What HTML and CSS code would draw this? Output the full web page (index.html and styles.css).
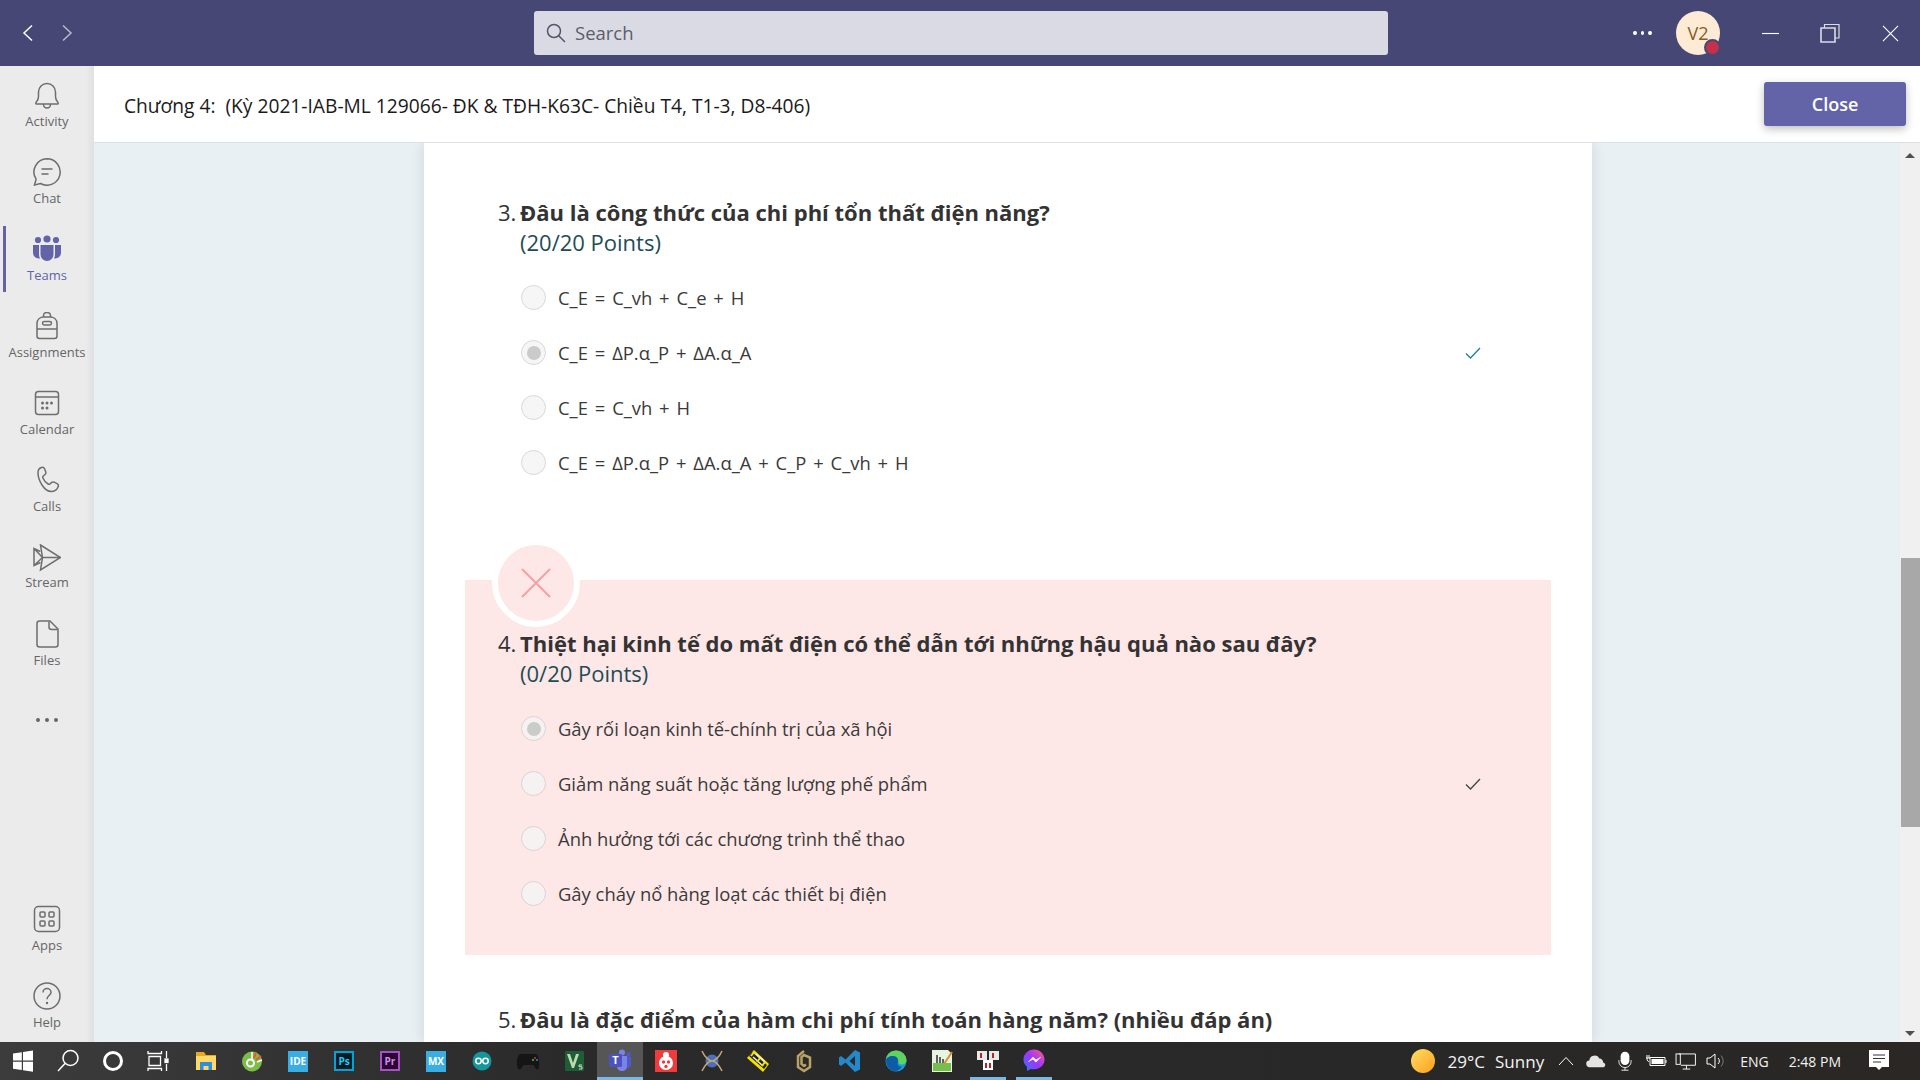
FILE: index.html
```html
<!DOCTYPE html>
<html>
    <head>
        <meta charset="utf-8">
        <meta name="viewport" content="width=device-width, initial-scale=1">
        <title>Chương 4</title>
        <link rel="stylesheet" href="styles.css">
    </head>
    <body>
        <div class="page">
            <div class="titlebar">
                <div class="history">
                    <svg class="hist-icon" viewBox="0 0 12 18"><path d="M10 1.500 2 9l8 7.500" stroke="#fff"/></svg>
                    <svg class="hist-icon" viewBox="0 0 12 18"><path d="M2 1.500 10 9l-8 7.500" stroke="#b9b9cf"/></svg>
                </div>
                <div class="search">
                    <svg class="search-icon" viewBox="0 0 20 20"><circle cx="8" cy="8" r="6.500"/><path d="M12.700 12.700 19 19"/></svg>
                    <span class="search-text">Search</span>
                </div>
                <div class="win-right">
                    <div class="dots"><i></i><i></i><i></i></div>
                    <div class="avatar">V2<span class="presence"></span></div>
                    <svg class="win-btn min" viewBox="0 0 18 18"><path d="M0 9h18"/></svg>
                    <svg class="win-btn restore" viewBox="0 0 20 20"><path d="M1 5h14v14H1z" stroke-width="1.6"/><path d="M4.500 5V1.500H19V15h-4" /></svg>
                    <svg class="win-btn close" viewBox="0 0 18 18"><path d="M1 1l16 16M17 1 1 17"/></svg>
                </div>
            </div>

            <div class="middle">
                <div class="sidebar">
                    <div class="nav">
                        <div class="nav-item">
                            <svg class="nav-icon" viewBox="0 0 28 28"><path d="M3 21.500c2-2 2.500-3.500 2.500-6V11a8.500 8.500 0 0 1 17 0v4.500c0 2.500.5 4 2.500 6 .5.7 0 1.500-.8 1.500H3.800c-.8 0-1.300-.8-.8-1.500zM10.500 23.500a3.500 3.500 0 0 0 7 0"/></svg>
                            <span>Activity</span>
                        </div>
                        <div class="nav-item">
                            <svg class="nav-icon" viewBox="0 0 28 28"><path d="M14 .8a13.200 13.200 0 1 1-6.500 24.700L1.500 27l1.600-5.800A13.200 13.200 0 0 1 14 .8z"/><path d="M8.500 11h11M8.500 16h7"/></svg>
                            <span>Chat</span>
                        </div>
                        <div class="nav-item active">
                            <svg class="nav-icon" viewBox="0 0 28 28"><g fill="#6264a7" stroke="none"><circle cx="14" cy="4" r="3.600"/><circle cx="5" cy="5" r="3.100"/><circle cx="23" cy="5" r="3.100"/><path d="M7.500 10h13v9.500a6.500 6.500 0 0 1-13 0z"/><path d="M0 10h6v9.500c0 1.500.3 2.800 1 4-3.500 0-7-1.500-7-6zM22 10h6v7.500c0 4.500-3.500 6-7 6 .7-1.200 1-2.500 1-4z"/></g></svg>
                            <span>Teams</span>
                        </div>
                        <div class="nav-item">
                            <svg class="nav-icon" viewBox="0 0 28 28"><path d="M4 24V11.500C4 7.500 7 5 11 5h6c4 0 7 2.500 7 6.500V24a2.500 2.500 0 0 1-2.500 2.500h-15A2.500 2.500 0 0 1 4 24z"/><path d="M10.500 5V3.500a3.500 3 0 0 1 7 0V5M4 17h20"/><rect x="9.500" y="9.500" width="9" height="3.500" rx="1.700"/></svg>
                            <span>Assignments</span>
                        </div>
                        <div class="nav-item">
                            <svg class="nav-icon" viewBox="0 0 28 28"><rect x="2.500" y="2.500" width="23" height="23" rx="3"/><path d="M2.500 8h23"/><g fill="#6e6e6e" stroke="none"><circle cx="9.500" cy="14" r="1.500"/><circle cx="14" cy="14" r="1.500"/><circle cx="18.500" cy="14" r="1.500"/><circle cx="9.500" cy="19" r="1.500"/><circle cx="14" cy="19" r="1.500"/></g></svg>
                            <span>Calendar</span>
                        </div>
                        <div class="nav-item">
                            <svg class="nav-icon" viewBox="0 0 28 28"><path d="M5 6.500c0-2.500 2-4.500 3.500-5 1.500-.5 2.500 0 3 1.300l1.200 3c.4 1 .1 2-.7 2.700l-1.700 1.500c-.6.600-.7 1.200-.4 2 1 2.500 3 4.700 5.200 6 .7.400 1.400.3 2-.2l1.300-1.200c.8-.7 1.800-.9 2.800-.4l2.800 1.400c1.200.6 1.700 1.700 1.200 3-.7 2-2.800 4.900-6.200 4.900C11 26 5 14 5 6.500z"/></svg>
                            <span>Calls</span>
                        </div>
                        <div class="nav-item nav-stream">
                            <svg class="nav-icon" viewBox="0 0 28 28"><path d="M7.500 1l20 12.500L7.500 26l2-12.500z"/><path d="M7.300 7.500 1 4.500v17l6.500-3M1 4.500l8.500 9-8.500 8M9.500 13.500h18"/></svg>
                            <span>Stream</span>
                        </div>
                        <div class="nav-item">
                            <svg class="nav-icon" viewBox="0 0 28 28"><path d="M6.500 1h10.500l8 8v15.500a2.500 2.500 0 0 1-2.500 2.500h-16A2.500 2.500 0 0 1 4 24.500v-21A2.500 2.500 0 0 1 6.500 1z"/><path d="M16 1.500v5.500a2.500 2.500 0 0 0 2.500 2.500h6"/></svg>
                            <span>Files</span>
                        </div>
                        <div class="nav-more"><i></i><i></i><i></i></div>
                    </div>
                    <div class="nav nav-bottom">
                        <div class="nav-item">
                            <svg class="nav-icon" viewBox="0 0 28 28"><rect x="1.500" y="1.500" width="25" height="25" rx="4"/><rect x="7" y="7" width="5" height="5" rx="1"/><rect x="16" y="7" width="5" height="5" rx="1"/><rect x="7" y="16" width="5" height="5" rx="1"/><rect x="16" y="16" width="5" height="5" rx="1"/></svg>
                            <span>Apps</span>
                        </div>
                        <div class="nav-item">
                            <svg class="nav-icon" viewBox="0 0 28 28"><circle cx="14" cy="14" r="13"/><path d="M10 10.500c0-2.500 2-4 4-4s4 1.500 4 3.700c0 3.300-4 3.300-4 7"/><circle cx="14" cy="21" r="1.200" fill="#6e6e6e" stroke="none"/></svg>
                            <span>Help</span>
                        </div>
                    </div>
                </div>

                <div class="content">
                    <div class="header">
                        <div class="header-title">Chương 4:&nbsp; (Kỳ 2021-IAB-ML 129066- ĐK &amp; TĐH-K63C- Chiều T4, T1-3, D8-406)</div>
                        <div class="close-btn">Close</div>
                    </div>
                    <div class="scroll-wrap">
                        <div class="scroll-body">
                            <div class="card">
                                <div class="question">
                                    <div class="q-num">3.</div>
                                    <div class="q-title">Đâu là công thức của chi phí tổn thất điện năng?</div>
                                    <div class="q-points">(20/20 Points)</div>
                                    <div class="options">
                                        <div class="option formula"><span class="radio"></span><span>C_E = C_vh + C_e + H</span></div>
                                        <div class="option formula"><span class="radio checked"></span><span>C_E = ΔP.α_P + ΔA.α_A</span>
                                            <svg class="tick" viewBox="0 0 16 12"><path d="M1 6.500 5.500 11 15 1"/></svg></div>
                                        <div class="option formula"><span class="radio"></span><span>C_E = C_vh + H</span></div>
                                        <div class="option formula"><span class="radio"></span><span>C_E = ΔP.α_P + ΔA.α_A + C_P + C_vh + H</span></div>
                                    </div>
                                </div>

                                <div class="question wrong">
                                    <div class="wrong-badge">
                                        <svg viewBox="0 0 30 30"><path d="M1 1l28 28M29 1 1 29"/></svg>
                                    </div>
                                    <div class="q-num">4.</div>
                                    <div class="q-title">Thiệt hại kinh tế do mất điện có thể dẫn tới những hậu quả nào sau đây?</div>
                                    <div class="q-points">(0/20 Points)</div>
                                    <div class="options">
                                        <div class="option"><span class="radio checked"></span><span>Gây rối loạn kinh tế-chính trị của xã hội</span></div>
                                        <div class="option"><span class="radio"></span><span>Giảm năng suất hoặc tăng lượng phế phẩm</span>
                                            <svg class="tick dark" viewBox="0 0 16 12"><path d="M1 6.500 5.500 11 15 1"/></svg></div>
                                        <div class="option"><span class="radio"></span><span>Ảnh hưởng tới các chương trình thể thao</span></div>
                                        <div class="option"><span class="radio"></span><span>Gây cháy nổ hàng loạt các thiết bị điện</span></div>
                                    </div>
                                </div>

                                <div class="question">
                                    <div class="q-num">5.</div>
                                    <div class="q-title">Đâu là đặc điểm của hàm chi phí tính toán hàng năm? (nhiều đáp án)</div>
                                </div>
                            </div>
                        </div>
                        <div class="scrollbar">
                            <span class="arrow up"></span>
                            <span class="thumb"></span>
                            <span class="arrow down"></span>
                        </div>
                    </div>
                </div>
            </div>

            <div class="taskbar">
                <div class="task-apps">
                    <div class="task task-sys"><svg viewBox="0 0 24 24"><path fill="#fff" d="M2 4.500 10.800 3.200v8.300H2zM12 3 22 1.500v10H12zM2 12.700h8.800v8.300L2 19.700zM12 12.700h10v10L12 21.200z"/></svg></div>
                    <div class="task task-sys"><svg viewBox="0 0 24 24" fill="none" stroke="#fff" stroke-width="1.500"><circle cx="14.500" cy="9" r="7.500"/><path d="M9 14.500 2 22"/></svg></div>
                    <div class="task task-sys"><svg viewBox="0 0 24 24" fill="none" stroke="#fff" stroke-width="3"><circle cx="12" cy="12" r="8.500"/></svg></div>
                    <div class="task task-view"><svg viewBox="0 0 24 24" fill="none" stroke="#fff" stroke-width="1.300"><path d="M2 2v2.500h13.500V2M2 22v-2.500h13.500V22M3 7.500h11.500v9H3zM20.500 2v7M20.500 15v7"/><rect x="19" y="10" width="3" height="3.500" fill="#fff"/></svg></div>
                    <div class="task"><svg viewBox="0 0 24 24"><path fill="#e8a820" d="M2 3h8l2 3h10v3H2z"/><path fill="#ffd968" d="M2 7h20v14H2z"/><path fill="#2f8fdc" d="M6 13h12v8h-3.500v-4h-5v4H6z"/></svg></div>
                    <div class="task"><svg viewBox="0 0 24 24"><circle cx="12" cy="12.500" r="10" fill="#7cbd47"/><circle cx="10.500" cy="14" r="3.500" fill="none" stroke="#fff" stroke-width="2"/><path stroke="#e8553a" stroke-width="2" d="M14 9l2-6M16 11l5-4"/><path stroke="#fff" stroke-width="1.500" d="M12 10l0-7M17 13l5-2"/></svg></div>
                    <div class="task"><span class="box box-ide">IDE</span></div>
                    <div class="task"><span class="box box-ps">Ps</span></div>
                    <div class="task"><span class="box box-pr">Pr</span></div>
                    <div class="task"><span class="box box-mx">MX</span></div>
                    <div class="task"><svg viewBox="0 0 24 24"><circle cx="12" cy="12" r="9.500" fill="#14979c"/><g fill="none" stroke="#fff" stroke-width="1.500"><circle cx="8.500" cy="12" r="2.700"/><circle cx="15.500" cy="12" r="2.700"/></g></svg></div>
                    <div class="task"><svg viewBox="0 0 24 24"><path fill="#151515" d="M5 5h14c2.500 0 3.500 3 4 7 .5 4 .5 8-1.500 8.500-1.500.3-2.500-2.500-4-4.500H7.500C6 18 5 20.800 3.500 20.500 1.500 20 .5 16 1 12c.5-4 1.500-7 4-7z"/><circle cx="19" cy="9" r="1" fill="#d33"/><circle cx="17" cy="11" r="1" fill="#3c3"/><circle cx="21" cy="11" r="1" fill="#38d"/></svg></div>
                    <div class="task"><svg viewBox="0 0 24 24"><rect x="3" y="2" width="19" height="20" rx="1" fill="#1e5d36"/><path d="M5 5h3l3 9 3-9h3l-5 14h-2z" fill="#bcd9b0"/><path d="M20 16h-3v1.700h3v2.300h-3" fill="none" stroke="#dfeedd" stroke-width=".9"/></svg></div>
                    <div class="task task-active"><svg viewBox="0 0 24 24"><circle cx="14" cy="4.500" r="3" fill="#7b83eb"/><circle cx="20.500" cy="6.500" r="2.300" fill="#5059c9"/><path fill="#5059c9" d="M17 9h6v7c0 3-2 4-4 4h-2z"/><path fill="#7b83eb" d="M9 8h10v10c0 3-2 5-5 5s-5-2-5-5z"/><rect x="1" y="6" width="13" height="13" rx="1" fill="#4b53bc"/><text class="teams-t" x="7.500" y="16.200">T</text></svg></div>
                    <div class="task"><svg viewBox="0 0 24 24"><rect x="1" y="1" width="22" height="22" fill="#ef3b3b"/><circle cx="12" cy="14" r="7" fill="#fff"/><circle cx="12" cy="6" r="3" fill="#fff"/><g fill="#ef3b3b"><circle cx="9.500" cy="13" r="1.700"/><circle cx="14.500" cy="13" r="1.700"/><circle cx="12" cy="17.500" r="1.700"/></g></svg></div>
                    <div class="task"><svg viewBox="0 0 24 24"><circle cx="12" cy="12" r="6.500" fill="#4a6fc0"/><path fill="none" stroke="#c4a970" stroke-width="1.500" d="M2 2c3 7 8 10 10 10S19 9 22 2M2 22c3-6 7-10 10-10s7 4 10 10"/></svg></div>
                    <div class="task"><svg viewBox="0 0 24 24"><path fill="#f2e200" d="M1 9l7-8 15 14-6 8z"/><path fill="#222" d="M6 3l15 13-3 4L3 7z"/><path stroke="#eee" stroke-width="1.500" d="M7 8l10 9M10 5l9 8"/><path stroke="#f2e200" stroke-width="2" d="M8 3 5 7M14 9l-3 4M19 13l-3 4"/></svg></div>
                    <div class="task"><svg viewBox="0 0 24 24" fill="none" stroke="#b9a266" stroke-width="2.500"><path d="M12 2 6 7v11l6 4 6-4V8.500L12 6l-2.500 2v7l2.500 2 2-1.500"/></svg></div>
                    <div class="task"><svg viewBox="0 0 24 24"><path fill="#2489ca" d="M17 1 22 3.500v17L17 23 7.500 13.500 3 17l-2-1.500v-7L3 7l4.500 3.500zM17 7l-5.500 5L17 17z"/></svg></div>
                    <div class="task"><svg viewBox="0 0 24 24"><circle cx="12" cy="12" r="10.500" fill="#1b9de2"/><path fill="#5fd35c" d="M2 10C3 5 7 1.500 12 1.500c6 0 10.500 4.500 10.500 10 0 2.500-2.500 4-5 4-2 0-3-1-3-2.500 0-4-3-5.500-6-5.500-3 0-5.500 1-6.500 2.500z"/><path fill="#0d5ca8" d="M2 12c0-3 3-5 7-5s5.500 3 5 6c-1 3 1 5 4 4.500-2 3.500-5 5-8 4.500-4-.5-8-5-8-10z"/></svg></div>
                    <div class="task"><svg viewBox="0 0 24 24"><path fill="#e8f3e2" d="M2 1h16l4 4v18H2z"/><path fill="#74c04a" d="M3 14h18v8H3z"/><path stroke="#333" stroke-width="1.500" d="M7 6v8M10 8v6M13 10v4"/><path stroke="#d9902a" stroke-width="2" d="M14 15 22 3"/></svg></div>
                    <div class="task task-open"><svg viewBox="0 0 24 24"><rect x="1" y="3" width="10" height="9" fill="#e8e8e8"/><rect x="13" y="3" width="10" height="9" fill="#e8e8e8"/><rect x="7" y="12" width="10" height="10" fill="#fff"/><path stroke="#b22" stroke-width="2" d="M5 5v5M17 5v5M10 15v5M14 15v5"/></svg></div>
                    <div class="task task-open"><svg viewBox="0 0 24 24"><defs><linearGradient id="msg" x1="0" y1="1" x2="1" y2="0"><stop offset="0" stop-color="#2a7cf7"/><stop offset=".5" stop-color="#a033ff"/><stop offset="1" stop-color="#ff5c87"/></linearGradient></defs><path fill="url(#msg)" d="M12 1.500C6 1.500 1.500 6 1.500 11.500c0 3 1.300 5.500 3.500 7.300V23l3.800-2.100c1 .3 2.100.4 3.200.4 6 0 10.500-4.400 10.500-9.800S18 1.500 12 1.500z"/><path fill="#fff" d="M5.500 14.500 11 8.700l3 2.800 5.500-3-5.500 6-3-3z"/></svg></div>
                </div>
                <div class="tray">
                    <span class="sun"></span>
                    <span class="temp">29°C</span>
                    <span class="sunny">Sunny</span>
                    <svg class="tray-icon caret" viewBox="0 0 16 10"><path d="M1 9l7-7.500L15 9"/></svg>
                    <svg class="tray-icon cloud" viewBox="0 0 22 14"><path fill="#e4e4e4" stroke="none" d="M4 13.500a3.500 3.500 0 0 1-.5-7A5.500 5.500 0 0 1 14 4.500a4.500 4.500 0 0 1 4 4 2.600 2.600 0 0 1 .5 5z"/></svg>
                    <svg class="tray-icon mic" viewBox="0 0 16 22"><rect x="3" y="0.500" width="10" height="15" rx="5" fill="#fff" stroke="none"/><path d="M1 10v1.500a7 7 0 0 0 14 0V10M8 18.500v3M4 21.500h8"/></svg>
                    <svg class="tray-icon battery" viewBox="0 0 22 14"><path d="M5 3.500h15v8H5zM21 6v3"/><rect x="6.500" y="5" width="12" height="5" fill="#fff" stroke="none"/><path d="M1 4h4M2 1v3M4 1v3M2 4c0 3 1 3.500 2 3.500"/></svg>
                    <svg class="tray-icon net" viewBox="0 0 22 18"><path d="M4 1h17.500v12H6M12 13v4M8 17h8"/><rect x="1" y="1" width="4.500" height="11"/></svg>
                    <svg class="tray-icon vol" viewBox="0 0 20 16"><path d="M1 5h3l5-4v14l-5-4H1zM12 5a4 4 0 0 1 0 6"/><path d="M15 2.500a8 8 0 0 1 0 11" stroke="#777"/></svg>
                    <span class="eng">ENG</span>
                    <span class="clock">2:48 PM</span>
                    <svg class="tray-icon notif" viewBox="0 0 20 22"><path fill="#fff" stroke="none" d="M0 0h20v17h-7l-3 3-3-3H0z"/><path stroke="#333" d="M4 5h12M4 8.500h12M4 12h8"/></svg>
                </div>
            </div>
        </div>
    </body>
</html>
```
FILE: styles.css
```css
html, body{
    margin: 0;
    height: 100%;
}
body{
    font-family: "Open Sans", "Noto Sans", sans-serif;
    color: #333;
    overflow: hidden;
}
.page{
    display: flex;
    flex-direction: column;
    width: 1920px;
    height: 1080px;
}

/* top bar */
.titlebar{
    height: 66px;
    flex: none;
    background-color: #464775;
    display: flex;
    align-items: center;
    position: relative;
}
.history{
    width: 534px;
    padding-left: 22px;
    box-sizing: border-box;
    display: flex;
    gap: 27px;
}
.hist-icon{
    width: 12px;
    height: 18px;
    fill: none;
    stroke-width: 1.5;
}
.search{
    width: 854px;
    height: 44px;
    box-sizing: border-box;
    background-color: #dadae4;
    border-radius: 3px;
    display: flex;
    align-items: center;
    gap: 9px;
    padding-left: 12px;
    font-size: 18.5px;
    color: #5d5d6b;
}
.search-text{
    padding-bottom: 2px;
}
.search-icon{
    width: 20px;
    height: 20px;
    fill: none;
    stroke: #55556a;
    stroke-width: 1.5;
}
.win-right{
    flex: 1;
    display: flex;
    align-items: center;
    padding-left: 245px;
}
.dots{
    display: flex;
    gap: 4px;
    width: 19px;
}
.dots i{
    width: 4px;
    height: 4px;
    border-radius: 50%;
    background-color: #fff;
}
.avatar{
    width: 44px;
    height: 44px;
    margin-left: 24px;
    border-radius: 50%;
    background-color: #fdebd5;
    color: #8a5a25;
    font-size: 18px;
    display: flex;
    align-items: center;
    justify-content: center;
    position: relative;
}
.presence{
    position: absolute;
    right: -1px;
    bottom: -1px;
    width: 13px;
    height: 13px;
    border-radius: 50%;
    background-color: #c4314b;
    border: 2px solid #464775;
}
.win-btn{
    fill: none;
    stroke: #fff;
    stroke-width: 1.2;
}
.min{
    width: 17px;
    height: 17px;
    margin-left: 42px;
}
.restore{
    width: 20px;
    height: 20px;
    margin-left: 41px;
    stroke: #dcdce6;
}
.close{
    width: 17px;
    height: 17px;
    margin-left: 42px;
}

.middle{
    flex: 1;
    display: flex;
    min-height: 0;
}

/* left rail */
.sidebar{
    width: 94px;
    flex: none;
    background: linear-gradient(to right, #ebebeb 86px, #e0e0e0);
    display: flex;
    flex-direction: column;
    justify-content: space-between;
    overflow: hidden;
}
.nav{
    display: flex;
    flex-direction: column;
}
.nav-bottom{
    margin-bottom: -2px;
}
.nav-item{
    height: 77px;
    display: flex;
    flex-direction: column;
    align-items: center;
    justify-content: center;
    gap: 4px;
    font-size: 13px;
    color: #666;
    position: relative;
}
.nav-item.nav-stream{
    gap: 2px;
}
.nav-item span{
    line-height: 16px;
    white-space: nowrap;
}
.nav-icon{
    width: 28px;
    height: 28px;
    fill: none;
    stroke: #6e6e6e;
    stroke-width: 1.5;
}
.nav-item.active{
    color: #6264a7;
}
.nav-item.active::before{
    content: "";
    position: absolute;
    left: 3px;
    top: 6px;
    bottom: 5px;
    width: 3px;
    background-color: #6264a7;
}
.nav-more{
    display: flex;
    justify-content: center;
    gap: 5px;
    padding-top: 36px;
}
.nav-more i{
    width: 4px;
    height: 4px;
    border-radius: 50%;
    background-color: #666;
}

/* form view */
.content{
    flex: 1;
    display: flex;
    flex-direction: column;
    min-width: 0;
}
.header{
    height: 76px;
    flex: none;
    background-color: #fff;
    border-bottom: 1px solid #dcdfe3;
    display: flex;
    align-items: center;
    justify-content: space-between;
    padding: 0 14px 0 30px;
}
.header-title{
    font-size: 19.2px;
    font-weight: 500;
    padding-top: 2px;
    color: #1a1a1a;
}
.close-btn{
    width: 142px;
    height: 44px;
    background-color: #6264a7;
    border-radius: 3px;
    color: #fff;
    font-size: 18px;
    font-weight: 600;
    display: flex;
    align-items: center;
    justify-content: center;
    box-shadow: 0 3px 8px rgba(0,0,0,0.25);
}
.scroll-wrap{
    flex: 1;
    display: flex;
    min-height: 0;
}
.scroll-body{
    flex: 1;
    background-color: #e9f0f3;
    overflow: hidden;
}
.card{
    width: 1168px;
    margin-left: 330px;
    height: 100%;
    background-color: #fff;
    box-shadow: 0 0 12px rgba(60,90,100,0.18);
    padding: 6px 41px 0;
    box-sizing: border-box;
}
.question{
    display: grid;
    grid-template-columns: 22px 1fr;
    padding: 48px 33px 33px;
    position: relative;
}
.q-num{
    font-size: 22px;
    line-height: 31px;
    color: #333;
}
.q-title{
    font-size: 22px;
    line-height: 31px;
    font-weight: 700;
    color: #333;
}
.q-points{
    grid-column: 2;
    font-size: 22px;
    line-height: 31px;
    margin-top: -1px;
    color: #1d4d56;
}
.options{
    grid-column: 2;
    margin-top: 12px;
    margin-bottom: 1px;
}
.option{
    height: 55px;
    display: flex;
    align-items: center;
    gap: 12px;
    font-size: 18.4px;
    color: #3a3a3a;
    margin-right: 37px;
}
.option.formula{
    word-spacing: 2.1px;
}
.radio{
    width: 25px;
    height: 25px;
    margin-left: 1px;
    box-sizing: border-box;
    border: 1px solid #d9d9d9;
    border-radius: 50%;
    background-color: #f6f6f6;
    display: flex;
    align-items: center;
    justify-content: center;
    flex: none;
}
.radio.checked::after{
    content: "";
    width: 14px;
    height: 14px;
    border-radius: 50%;
    background-color: #cbcbcb;
}
.tick{
    width: 16px;
    height: 12px;
    margin-left: auto;
    fill: none;
    stroke: #1f7f95;
    stroke-width: 1.3;
}
.tick.dark{
    stroke: #444;
}
.wrong{
    background-color: #fde7e7;
    margin-top: 56px;
    margin-bottom: 1px;
}
.wrong .radio{
    background-color: #f7f2f2;
    border-color: #dcd3d3;
}
.wrong-badge{
    position: absolute;
    left: 27px;
    top: -41px;
    width: 88px;
    height: 88px;
    box-sizing: border-box;
    border-radius: 50%;
    background-color: #fde7e7;
    border: 6px solid #fff;
    display: flex;
    align-items: center;
    justify-content: center;
}
.wrong-badge svg{
    width: 30px;
    height: 30px;
    fill: none;
    stroke: #f8a0a0;
    stroke-width: 2;
}

.scrollbar{
    width: 20px;
    flex: none;
    background-color: #f0f0f0;
    position: relative;
}
.arrow{
    position: absolute;
    left: 5px;
    border-left: 5px solid transparent;
    border-right: 5px solid transparent;
}
.arrow.up{
    top: 10px;
    border-bottom: 5px solid #505050;
}
.arrow.down{
    bottom: 6px;
    border-top: 5px solid #505050;
}
.thumb{
    position: absolute;
    left: 1px;
    right: 0;
    top: 415px;
    height: 269px;
    background-color: #a8a8a8;
}

/* windows taskbar */
.taskbar{
    height: 38px;
    flex: none;
    background: linear-gradient(to right, #3c3c3c, #2a2a2a 30%, #282828 70%, #2a2724);
    display: flex;
    justify-content: space-between;
    color: #fff;
    position: relative;
}
.task-apps{
    display: flex;
}
.task{
    width: 46px;
    height: 38px;
    box-sizing: border-box;
    display: flex;
    align-items: center;
    justify-content: center;
}
.task svg{
    width: 24px;
    height: 24px;
}
.task-sys{
    width: 45px;
}
.task-view{
    width: 45px;
    margin-right: 3px;
}
.task-active{
    background-color: #565656;
    border-bottom: 3px solid #76b9ed;
}
.task-open{
    border-bottom: 3px solid #76b9ed;
    margin: 0 5px;
    width: 36px;
}
.teams-t{
    font-family: "Open Sans", sans-serif;
    font-size: 11px;
    font-weight: 700;
    fill: #fff;
    text-anchor: middle;
}
.box{
    width: 20px;
    height: 20px;
    display: flex;
    align-items: center;
    justify-content: center;
    font-size: 10px;
    font-weight: 700;
    box-sizing: border-box;
}
.box-ide, .box-mx{
    background-color: #38aee3;
    height: 21px;
}
.box-ps{
    background-color: #001d26;
    border: 2px solid #00a5d8;
    color: #31c5f0;
}
.box-pr{
    background-color: #2a0634;
    border: 2px solid #a94fc8;
    color: #d48fe8;
}
.tray{
    display: flex;
    align-items: center;
    font-size: 16px;
    color: #f2f2f2;
    padding-right: 31px;
}
.sun{
    width: 24px;
    height: 24px;
    border-radius: 50%;
    background: linear-gradient(135deg, #ffe066, #ff9d1a);
}
.temp{
    margin-left: 13px;
    font-size: 17px;
}
.sunny{
    margin-left: 10px;
    font-size: 17px;
}
.tray-icon{
    fill: none;
    stroke: #fff;
    stroke-width: 1;
}
.caret{
    width: 16px;
    height: 10px;
    margin-left: 14px;
}
.cloud{
    width: 21px;
    height: 14px;
    margin-left: 12px;
}
.mic{
    width: 14px;
    height: 20px;
    margin-left: 11px;
}
.battery{
    width: 22px;
    height: 14px;
    margin-left: 13px;
}
.net{
    width: 21px;
    height: 17px;
    margin-left: 8px;
}
.vol{
    width: 20px;
    height: 16px;
    margin-left: 10px;
}
.eng{
    margin-left: 14px;
    font-size: 14px;
}
.clock{
    margin-left: 20px;
    font-size: 14px;
}
.notif{
    width: 20px;
    height: 22px;
    margin-left: 28px;
}
```
